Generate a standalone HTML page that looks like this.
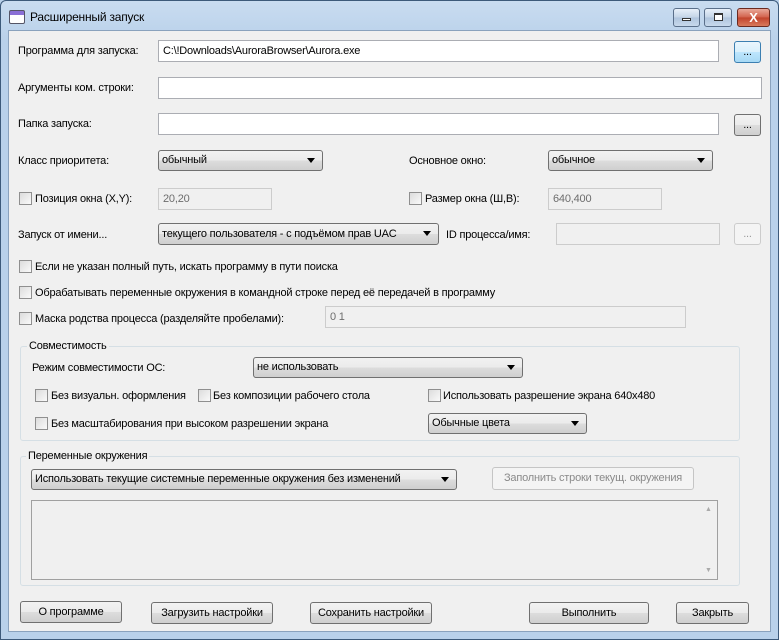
<!DOCTYPE html><html><head><meta charset="utf-8"><style>
*{box-sizing:border-box;margin:0;padding:0}
body{width:779px;height:640px;overflow:hidden;background:#b9d1ea;font-family:"Liberation Sans",sans-serif;font-size:11px;letter-spacing:-0.2px;color:#000;position:relative}
.frame{position:absolute;left:0;top:0;width:779px;height:640px;border:1px solid #3d5a7a;border-radius:6px 6px 0 0;background:linear-gradient(#c9dcf0,#b9d1ea 40px)}
.client{position:absolute;left:8px;top:30px;width:763px;height:602px;background:#f0f0f0;border:1px solid #8aa2bd}
.a{position:absolute;white-space:nowrap}
.in{position:absolute;background:#fff;border:1px solid #abadb3;height:22px;padding:0 4px;line-height:20px}
.dis{background:#f0f0f0;border-color:#ccc;color:#6d6d6d}
.btn{position:absolute;border:1px solid #707070;border-radius:3px;background:linear-gradient(#f2f2f2,#ebebeb 50%,#dddddd 50%,#cfcfcf);text-align:center;height:23px;line-height:20px}
.sel{position:absolute;border:1px solid #707070;border-radius:3px;background:linear-gradient(#f2f2f2,#ebebeb 50%,#dddddd 50%,#cfcfcf);height:21px;line-height:19px;padding-left:3px}
.sel:after{content:"";position:absolute;right:7px;top:7px;border:4px solid transparent;border-top:5px solid #000;border-bottom:0}
.cb{position:absolute;width:13px;height:13px;border:1px solid #8f8f8f;background:linear-gradient(135deg,#dcdcdc,#fafafa)}
.grp{position:absolute;border:1px solid #d5dfe5;border-radius:3px}
.gl{position:absolute;background:#f0f0f0;padding:0 2px}
.tb{position:absolute;top:8px;height:19px;border:1px solid #5a6f8a;border-radius:3px;background:linear-gradient(#e8f0f9,#c3d4e7 50%,#aec4dd 50%,#c8d9ec)}
</style></head><body>
<div class="frame"></div>
<div class="a" style="left:9px;top:10px;width:16px;height:14px;border:1px solid #556;background:linear-gradient(#8a6fd6 0 4px,#fff 4px);border-radius:2px"></div>
<div class="a" style="left:30px;top:10px;font-size:12px">Расширенный запуск</div>
<div class="tb" style="left:673px;width:27px"><div style="position:absolute;left:8px;top:9px;width:9px;height:3px;border:1px solid #333;background:#fff"></div></div>
<div class="tb" style="left:704px;width:28px"><div style="position:absolute;left:9px;top:4px;width:9px;height:8px;border:1px solid #333;border-top-width:2px;background:#fff"></div></div>
<div class="tb" style="left:737px;width:33px;border-color:#6b2a20;background:linear-gradient(#e9a99a,#d1604a 50%,#c0412a 50%,#d97a5c);color:#fff;font-weight:bold;text-align:center;line-height:17px;font-size:13px">X</div>
<div class="client"></div>

<div class="a" style="left:18px;top:45px">Программа для запуска:</div>
<div class="in" style="left:158px;top:40px;width:561px">C:\!Downloads\AuroraBrowser\Aurora.exe</div>
<div class="btn" style="left:734px;top:41px;width:27px;height:22px;border-color:#3c7fb1;background:linear-gradient(#eaf6fd,#d9f0fc 50%,#bee6fd 50%,#a7d9f5)">...</div>
<div class="a" style="left:18px;top:82px">Аргументы ком. строки:</div>
<div class="in" style="left:158px;top:77px;width:604px"></div>
<div class="a" style="left:18px;top:118px">Папка запуска:</div>
<div class="in" style="left:158px;top:113px;width:561px"></div>
<div class="btn" style="left:734px;top:114px;width:27px;height:22px">...</div>

<div class="a" style="left:18px;top:155px">Класс приоритета:</div>
<div class="sel" style="left:158px;top:150px;width:165px">обычный</div>
<div class="a" style="left:409px;top:155px">Основное окно:</div>
<div class="sel" style="left:548px;top:150px;width:165px">обычное</div>

<div class="cb" style="left:19px;top:192px"></div><div class="a" style="left:35px;top:193px">Позиция окна (X,Y):</div>
<div class="in dis" style="left:158px;top:188px;width:114px">20,20</div>
<div class="cb" style="left:409px;top:192px"></div><div class="a" style="left:425px;top:193px">Размер окна (Ш,В):</div>
<div class="in dis" style="left:548px;top:188px;width:114px">640,400</div>

<div class="a" style="left:18px;top:229px">Запуск от имени...</div>
<div class="sel" style="left:158px;top:223px;width:281px;height:22px;line-height:20px">текущего пользователя - с подъёмом прав UAC</div>
<div class="a" style="left:446px;top:229px">ID процесса/имя:</div>
<div class="in dis" style="left:556px;top:223px;width:164px"></div>
<div class="btn" style="left:734px;top:223px;width:27px;height:22px;border-color:#ccc;color:#999;background:#f4f4f4">...</div>

<div class="cb" style="left:19px;top:260px"></div><div class="a" style="left:35px;top:261px">Если не указан полный путь, искать программу в пути поиска</div>
<div class="cb" style="left:19px;top:286px"></div><div class="a" style="left:35px;top:287px">Обрабатывать переменные окружения в командной строке перед её передачей в программу</div>
<div class="cb" style="left:19px;top:312px"></div><div class="a" style="left:35px;top:313px">Маска родства процесса (разделяйте пробелами):</div>
<div class="in dis" style="left:325px;top:306px;width:361px">0 1</div>

<div class="grp" style="left:20px;top:346px;width:720px;height:95px"></div>
<div class="gl" style="left:27px;top:340px">Совместимость</div>
<div class="a" style="left:32px;top:362px">Режим совместимости ОС:</div>
<div class="sel" style="left:253px;top:357px;width:270px">не использовать</div>
<div class="cb" style="left:35px;top:389px"></div><div class="a" style="left:51px;top:390px">Без визуальн. оформления</div>
<div class="cb" style="left:198px;top:389px"></div><div class="a" style="left:213px;top:390px">Без композиции рабочего стола</div>
<div class="cb" style="left:428px;top:389px"></div><div class="a" style="left:443px;top:390px">Использовать разрешение экрана 640x480</div>
<div class="cb" style="left:35px;top:417px"></div><div class="a" style="left:51px;top:418px">Без масштабирования при высоком разрешении экрана</div>
<div class="sel" style="left:428px;top:413px;width:159px">Обычные цвета</div>

<div class="grp" style="left:20px;top:456px;width:720px;height:130px"></div>
<div class="gl" style="left:26px;top:450px">Переменные окружения</div>
<div class="sel" style="left:31px;top:469px;width:426px">Использовать текущие системные переменные окружения без изменений</div>
<div class="btn" style="left:492px;top:467px;width:202px;border-color:#c5c5c5;background:#f4f4f4;color:#8a8a8a">Заполнить строки текущ. окружения</div>
<div class="in" style="left:31px;top:500px;width:687px;height:80px;background:#f0f0f0;border-color:#a0a0a0"></div>
<div class="a" style="left:705px;top:506px;font-size:7px;color:#aaa">▲</div>
<div class="a" style="left:705px;top:567px;font-size:7px;color:#aaa">▼</div>

<div class="btn" style="left:20px;top:601px;width:102px;height:22px">О программе</div>
<div class="btn" style="left:151px;top:602px;width:122px;height:22px">Загрузить настройки</div>
<div class="btn" style="left:310px;top:602px;width:122px;height:22px">Сохранить настройки</div>
<div class="btn" style="left:529px;top:602px;width:120px;height:22px">Выполнить</div>
<div class="btn" style="left:676px;top:602px;width:73px;height:22px">Закрыть</div>
</body></html>
